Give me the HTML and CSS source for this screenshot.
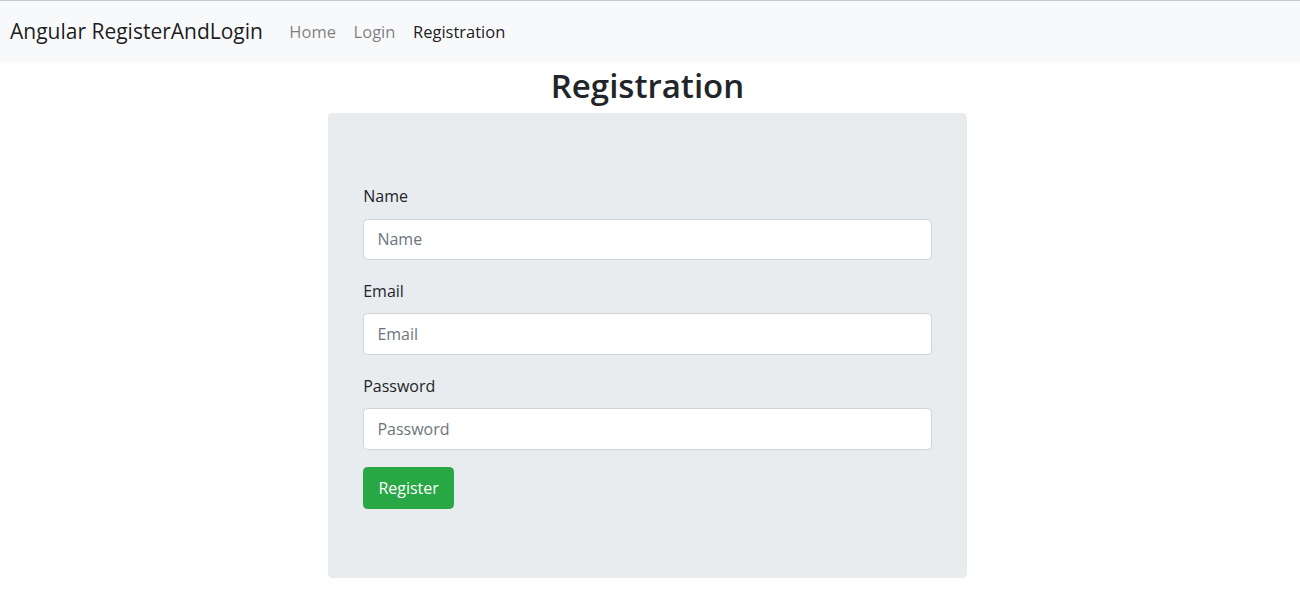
FILE: index.html
```html
<!DOCTYPE html>
<html lang="en">
<head>
<meta charset="utf-8">
<title>Angular RegisterAndLogin</title>
<link rel="stylesheet" href="styles.css">
</head>
<body>
<nav class="navbar">
  <a class="brand" href="#">Angular RegisterAndLogin</a>
  <ul class="nav">
    <li><a class="nav-link" href="#">Home</a></li>
    <li><a class="nav-link" href="#">Login</a></li>
    <li><a class="nav-link active" href="#">Registration</a></li>
  </ul>
</nav>
<main class="page">
  <h1 class="title">Registration</h1>
  <form class="card">
    <div class="group">
      <label class="label" for="name">Name</label>
      <input class="input" id="name" type="text" placeholder="Name">
    </div>
    <div class="group">
      <label class="label" for="email">Email</label>
      <input class="input" id="email" type="email" placeholder="Email">
    </div>
    <div class="group">
      <label class="label" for="password">Password</label>
      <input class="input" id="password" type="password" placeholder="Password">
    </div>
    <button class="btn" type="button">Register</button>
  </form>
</main>
</body>
</html>
```
FILE: styles.css
```css
* { box-sizing: border-box; }
html, body {
  margin: 0;
  background: #fff;
  font-family: "Open Sans", "Noto Sans", sans-serif;
  color: #212529;
}
.navbar {
  display: flex;
  align-items: center;
  height: 62px;
  padding: 0 10px;
  background: #f8f9fa;
  border-top: 1px solid #c3c8cd;
}
.brand {
  font-size: 21px;
  line-height: 33px;
  color: rgba(0,0,0,.9);
  text-decoration: none;
  margin-right: 17.6px;
}
.nav {
  display: flex;
  list-style: none;
  margin: 0;
  padding: 0;
}
.nav-link {
  display: block;
  padding: 0 8.8px;
  font-size: 16.5px;
  line-height: 26px;
  color: rgba(0,0,0,.5);
  text-decoration: none;
}
.nav-link.active { color: rgba(0,0,0,.9); }
.page {
  display: flex;
  flex-direction: column;
  align-items: center;
  padding-right: 5px;
}
.title {
  margin: 0;
  height: 51px;
  line-height: 48px;
  font-size: 33px;
  font-weight: 600;
  color: #212529;
}
.card {
  width: 639px;
  margin: 0;
  padding: 70.4px 35.2px 69px;
  background: #e9ecef;
  border-radius: 4.4px;
}
.group { margin-bottom: 17.6px; }
.label {
  display: block;
  font-size: 16px;
  line-height: 27px;
  margin-bottom: 8.2px;
  color: #212529;
}
.input {
  display: block;
  width: 100%;
  height: 41.8px;
  padding: 6.6px 13.2px;
  font-family: inherit;
  font-size: 16px;
  color: #495057;
  background: #fff;
  border: 1px solid #ced4da;
  border-radius: 4.4px;
}
.input::placeholder { color: #6c757d; }
.btn {
  display: block;
  height: 41.6px;
  padding: 0 14.2px;
  font-family: inherit;
  font-size: 16px;
  color: #fff;
  background: #28a745;
  border: 1px solid #28a745;
  border-radius: 4.4px;
}
```
